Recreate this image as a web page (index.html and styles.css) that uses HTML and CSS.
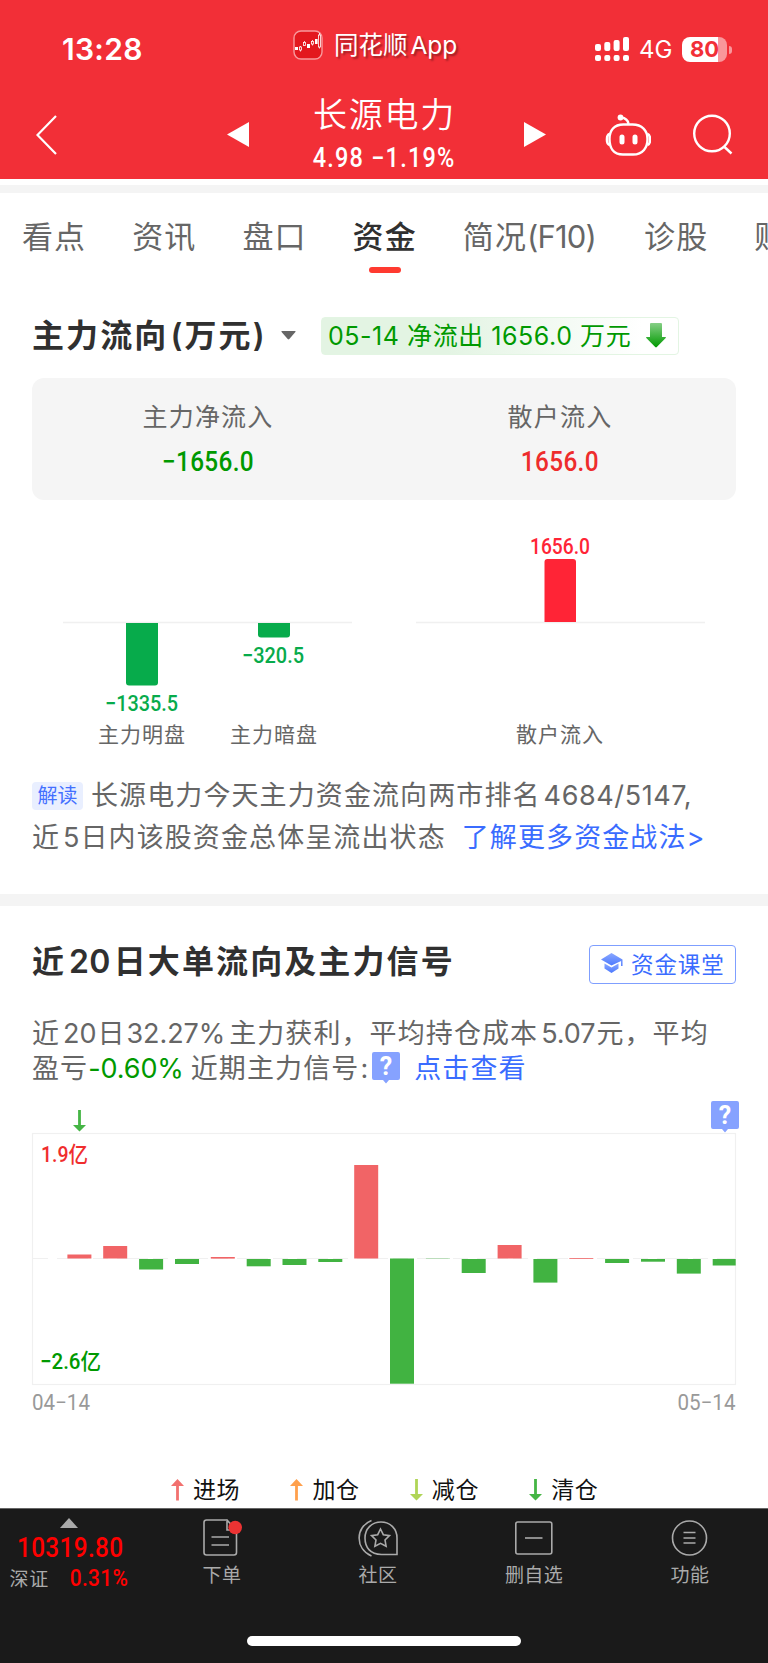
FILE: index.html
```html
<!DOCTYPE html>
<html lang="zh-CN">
<head>
  <meta charset="UTF-8" />
  <meta name="viewport" content="width=device-width, initial-scale=1.0"/>
  <title>长源电力 - 资金</title>
  <link rel="stylesheet" href="styles.css">
</head>
<body>
  <header class="header">
    <div class="status-bar">
      <span class="time">13:28</span>
      <div class="app-name">
        <svg width="30" height="30" viewBox="0 0 30 30">
          <rect x="1" y="1" width="28" height="28" rx="7" fill="#e3181e" stroke="#f8999c" stroke-width="1.4"/>
          <g fill="#fff">
            <rect x="2" y="17" width="3" height="3"/>
            <rect x="14" y="14" width="3" height="4"/>
            <rect x="22" y="9" width="2.6" height="5"/>
          </g>
          <g fill="none" stroke="#fff" stroke-width=".8">
            <path d="M7.500 16v1M7.500 20v1.500M11.500 11v1M19.500 10v1M19.500 14v1.500M26.500 3v2M26.500 17v1.500"/>
            <rect x="6.500" y="17" width="2" height="3"/>
            <rect x="10.500" y="12.500" width="2" height="3"/>
            <rect x="18.500" y="11.500" width="2" height="2.500"/>
            <rect x="25.500" y="5" width="2" height="12"/>
          </g>
        </svg>
        <span>同花顺 App</span>
      </div>
      <div class="signals">
        <svg width="34" height="25" viewBox="0 0 34 25" fill="#fff">
          <rect x="0" y="7" width="6" height="7" rx="2"/>
          <rect x="9.300" y="5" width="6" height="9" rx="2"/>
          <rect x="18.600" y="3" width="6" height="11" rx="2"/>
          <rect x="28" y="0" width="6" height="14" rx="2"/>
          <rect x="0" y="18" width="6" height="6" rx="2"/>
          <rect x="9.300" y="18" width="6" height="6" rx="2"/>
          <rect x="18.600" y="18" width="6" height="6" rx="2"/>
          <rect x="28" y="18" width="6" height="6" rx="2"/>
        </svg>
        <span class="network">4G</span>
        <span class="battery">80</span>
      </div>
    </div>

    <div class="title-bar">
      <svg class="back" width="21" height="40" viewBox="0 0 21 40" fill="none" stroke="#fff" stroke-width="2.200">
        <path d="M20 1L1.500 20L20 39"/>
      </svg>
      <svg class="prev" width="22" height="25" viewBox="0 0 22 25" fill="#fff"><path d="M0 12.500L22 0v25z"/></svg>
      <div class="stock">
        <h1>长源电力</h1>
        <p><span class="num">4.98 −1.19%</span></p>
      </div>
      <svg width="22" height="25" viewBox="0 0 22 25" fill="#fff"><path d="M22 12.500L0 0v25z"/></svg>
      <svg class="robot" width="46" height="42" viewBox="0 0 46 42" fill="none" stroke="#fff" stroke-width="2.400">
        <circle cx="15.500" cy="3.500" r="2.900" fill="#fff" stroke="none"/>
        <path d="M16 3.500C20 4 23 5.500 23.500 10"/>
        <path d="M18.500 10.500h9C37 10.500 42.500 16.500 42.500 25S38 40.500 28 40.500H18C8 40.500 4.500 33.500 4.500 25S9 10.500 18.500 10.500z"/>
        <path d="M4.500 20C1 21 1 30 4.500 31M42.500 20c3.500 1 3.500 10 0 11"/>
        <path d="M17 23v5M30 23v5" stroke-width="5" stroke-linecap="round"/>
      </svg>
      <svg class="search" width="40" height="41" viewBox="0 0 40 41" fill="none" stroke="#fff" stroke-width="2.400">
        <circle cx="19" cy="19.500" r="17.800"/>
        <path d="M31.500 33L38.500 39.500"/>
      </svg>
    </div>
  </header>

  <nav class="tabs">
    <a>看点</a>
    <a>资讯</a>
    <a>盘口</a>
    <a class="active">资金</a>
    <a class="brief"><span>简况<i>(F10)</i></span></a>
    <a>诊股</a>
    <a>财</a>
  </nav>

  <section class="flow">
    <div class="flow-head">
      <h2>主力流向<span class="unit">(万元)</span></h2>
      <svg class="caret" width="15" height="9" viewBox="0 0 15 9" fill="#666"><path d="M1 0h13q1 0 .4 1L8.300 8q-.8.800-1.600 0L.6 1Q0 0 1 0z"/></svg>
      <div class="flow-tag">
        <span>05-14 净流出 1656.0 万元</span>
        <svg width="20" height="25" viewBox="0 0 20 25">
          <defs>
            <linearGradient id="arrow" x1="0" y1="0" x2="0" y2="1">
              <stop offset="0" stop-color="#86cf86"/>
              <stop offset="1" stop-color="#009a00"/>
            </linearGradient>
          </defs>
          <path d="M5 0h10q1 0 1 1v13h3.500q.7.300.2 1L10.800 24q-.8.800-1.600 0L.3 15q-.5-.7.200-1H4V1q0-1 1-1z" fill="url(#arrow)"/>
        </svg>
      </div>
    </div>

    <div class="summary">
      <div>
        <p>主力净流入</p>
        <strong class="num green">−1656.0</strong>
      </div>
      <div>
        <p>散户流入</p>
        <strong class="num red">1656.0</strong>
      </div>
    </div>

    <svg class="flow-chart" width="704" height="225" viewBox="32 530 704 225">
      <path d="M63 622.500H352M416 622.500H705" stroke="#f0f0f0" stroke-width="1.500"/>
      <path d="M126 623h32v59.500q0 3-3 3h-26q-3 0-3-3z" fill="#07ab4b"/>
      <path d="M258 623h32v11.500q0 3-3 3h-26q-3 0-3-3z" fill="#07ab4b"/>
      <path d="M544.500 622v-60q0-3 3-3h25.500q3 0 3 3v60z" fill="#ff2436"/>
      <g class="chart-num" fill="#07ab4b">
        <text x="105" y="711" textLength="73" lengthAdjust="spacingAndGlyphs">−1335.5</text>
        <text x="242" y="663" textLength="62" lengthAdjust="spacingAndGlyphs">−320.5</text>
        <text x="530" y="553.500" textLength="60" lengthAdjust="spacingAndGlyphs" fill="#ff2436">1656.0</text>
      </g>
      <g class="chart-label">
        <text x="142" y="742">主力明盘</text>
        <text x="274" y="742">主力暗盘</text>
        <text x="560" y="742">散户流入</text>
      </g>
    </svg>

    <p class="reading"><span class="reading-tag">解读</span>长源电力今天主力资金流向两市排名<span class="digits rank">4684/5147,</span><br>近<span class="digits">5</span>日内该股资金总体呈流出状态<a>了解更多资金战法&gt;</a></p>
  </section>

  <section class="signal">
    <div class="signal-head">
      <h2>近<span class="digits">20</span>日大单流向及主力信号</h2>
      <a class="course">
        <svg width="22" height="20" viewBox="0 0 22 20">
          <defs>
            <linearGradient id="cap" x1="0" y1="0" x2="0" y2="1">
              <stop offset="0" stop-color="#8ba8ff"/>
              <stop offset="1" stop-color="#4a78ff"/>
            </linearGradient>
          </defs>
          <g fill="url(#cap)">
            <path d="M10.500 0L21.500 6.500V13h-1.400V8L10.500 12.500L0 6.500z"/>
            <path d="M3.500 10.500L10.500 14.500L17.500 10.500V15.500L10.500 20L3.500 15.500z"/>
          </g>
        </svg>
        资金课堂
      </a>
    </div>

    <p class="intro">近<span class="digits">20</span>日<span class="digits profit">32.27%</span>主力获利，平均持仓成本<span class="digits">5.07</span>元，平均<br>盈亏<span class="loss">-0.60%</span>近期主力信号<span class="colon">:</span><svg class="help" width="28" height="32" viewBox="0 0 28 32"><path d="M2 0h24q2 0 2 2v24q0 2-2 2h-9l-3 3.500L11 28H2q-2 0-2-2V2Q0 0 2 0z" fill="#86a2ff"/><text x="14" y="23">?</text></svg><a>点击查看</a></p>

    <div class="markers">
      <svg class="clear-mark" width="13" height="22" viewBox="0 0 13 22" fill="#45b545"><path d="M5.100 0h2.800v15H13L6.500 21.500L0 15h5.100z"/></svg>
      <svg class="help" width="28" height="32" viewBox="0 0 28 32"><path d="M2 0h24q2 0 2 2v24q0 2-2 2h-9l-3 3.500L11 28H2q-2 0-2-2V2Q0 0 2 0z" fill="#86a2ff"/><text x="14" y="23">?</text></svg>
    </div>

    <svg class="signal-chart" width="706" height="286" viewBox="31 1132 706 286">
      <rect x="32.500" y="1133.500" width="703" height="251" fill="none" stroke="#f0f0f0" stroke-width="1.200"/>
      <path d="M33 1258.500H736" stroke="#f0f0f0" stroke-dasharray="15 9 31 5"/>
      <g fill="#f16466">
        <rect x="67.400" y="1254.500" width="24" height="4"/>
        <rect x="103.200" y="1246" width="24" height="12.500"/>
        <rect x="210.800" y="1257" width="24" height="1.600"/>
        <rect x="354.200" y="1165" width="24" height="93.500"/>
        <rect x="497.600" y="1245" width="24" height="13.500"/>
        <rect x="569.300" y="1258" width="24" height=".8"/>
      </g>
      <g fill="#41b341">
        <rect x="139.100" y="1259" width="24" height="10.500"/>
        <rect x="175" y="1259" width="24" height="5"/>
        <rect x="246.700" y="1259" width="24" height="7.300"/>
        <rect x="282.500" y="1259" width="24" height="6"/>
        <rect x="318.300" y="1259" width="24" height="3"/>
        <rect x="390" y="1258.500" width="24" height="125.200"/>
        <rect x="425.900" y="1258.500" width="24" height=".3"/>
        <rect x="461.700" y="1259" width="24" height="14"/>
        <rect x="533.400" y="1259" width="24" height="23.600"/>
        <rect x="605.100" y="1259" width="24" height="4"/>
        <rect x="641" y="1259" width="24" height="2.700"/>
        <rect x="676.800" y="1259" width="24" height="14.600"/>
        <rect x="712.700" y="1259" width="23" height="6.500"/>
      </g>
      <g class="chart-num">
        <text x="41" y="1162" textLength="47" lengthAdjust="spacingAndGlyphs" fill="#f02d2d">1.9亿</text>
        <text x="40" y="1368.500" textLength="61" lengthAdjust="spacingAndGlyphs" fill="#009900">−2.6亿</text>
        <text class="date" x="32" y="1410" textLength="58" lengthAdjust="spacingAndGlyphs">04−14</text>
        <text class="date" x="677.500" y="1410" textLength="58" lengthAdjust="spacingAndGlyphs">05−14</text>
      </g>
    </svg>

    <ul class="legend">
      <li><svg width="13" height="22" viewBox="0 0 13 22" fill="#f2716f"><path d="M5.100 21.500h2.800V7H13L6.500 0L0 7h5.100z"/></svg>进场</li>
      <li><svg width="13" height="22" viewBox="0 0 13 22" fill="#ffa04d"><path d="M5.100 21.500h2.800V7H13L6.500 0L0 7h5.100z"/></svg>加仓</li>
      <li><svg width="13" height="22" viewBox="0 0 13 22" fill="#b0d557"><path d="M5.100 0h2.800v15H13L6.500 21.500L0 15h5.100z"/></svg>减仓</li>
      <li><svg width="13" height="22" viewBox="0 0 13 22" fill="#45b545"><path d="M5.100 0h2.800v15H13L6.500 21.500L0 15h5.100z"/></svg>清仓</li>
    </ul>
  </section>

  <footer class="footer">
    <div class="toolbar">
      <div class="index">
        <svg width="18" height="10" viewBox="0 0 18 10" fill="#aaa"><path d="M9 0L18 10H0z"/></svg>
        <span class="index-value num">10319.80</span>
        <div class="index-row"><span>深证</span><span class="index-rate num">0.31%</span></div>
      </div>
      <a class="tool">
        <svg width="40" height="38" viewBox="0 0 40 38" fill="none" stroke="#aaa" stroke-width="1.600">
          <path d="M24 1H4.500Q2 1 2 3.500V33.500Q2 36 4.500 36H32q2.500 0 2.500-2.500V11H25V1l9 10"/>
          <path d="M9.500 18h17.500M9.500 26h17.500"/>
          <circle cx="33.200" cy="8.500" r="6.800" fill="#eb3333" stroke="none"/>
        </svg>
        下单
      </a>
      <a class="tool">
        <svg width="40" height="38" viewBox="0 0 40 38" fill="none" stroke="#aaa" stroke-width="1.600">
          <path d="M13.500 1.500C-3 8 -3 29.500 13.500 37M39 35.500H23.500C12 35.500 7 28 7 19S13.500 3 23 3S39 10 39 19z"/>
          <path d="M22.500 10l2.800 5.700 6.200.9-4.500 4.400 1.100 6.200-5.600-2.900-5.600 2.900 1.100-6.200-4.500-4.400 6.200-.9z"/>
        </svg>
        社区
      </a>
      <a class="tool">
        <svg width="40" height="38" viewBox="0 0 40 38" fill="none" stroke="#aaa" stroke-width="1.600">
          <rect x="1.800" y="3" width="36" height="32" rx="2"/>
          <path d="M11 19h17.500"/>
        </svg>
        删自选
      </a>
      <a class="tool">
        <svg width="40" height="38" viewBox="0 0 40 38" fill="none" stroke="#aaa" stroke-width="1.600">
          <circle cx="19.500" cy="19" r="17"/>
          <path d="M13.500 13.500h12M13.500 19h12M13.500 24h12"/>
        </svg>
        功能
      </a>
    </div>
    <div class="home-bar"></div>
  </footer>
</body>
</html>
```

FILE: styles.css
```css
* {
  margin: 0;
  padding: 0;
  box-sizing: border-box;
}

body {
  width: 768px;
  height: 1663px;
  display: flex;
  flex-direction: column;
  background: #fff;
  color: #666;
  font-family: Inter, "Noto Sans CJK SC", sans-serif;
  overflow: hidden;
}

svg {
  display: block;
  flex: none;
}

/* narrow figures */
.num {
  display: inline-block;
  font-family: Roboto, "Noto Sans CJK SC", sans-serif;
  font-weight: 500;
  letter-spacing: .4px;
  white-space: pre;
  transform: scaleX(.87);
}

.green {
  color: #009900;
}

.red {
  color: #ee2c2c;
}

/* header */
.header {
  flex: none;
  height: 179px;
  background: #f22f37;
  color: #fff;
}

.status-bar {
  display: flex;
  align-items: center;
  height: 90px;
  padding: 8px 37px 0 62px;
}

.time {
  width: 231px;
  font-size: 30px;
  font-weight: 600;
  letter-spacing: .3px;
}

.app-name {
  display: flex;
  align-items: center;
  gap: 11px;
  width: 302px;
  margin-top: -8px;
  font-size: 24.5px;
  word-spacing: -4px;
  text-shadow: 2px 2px 2px rgba(0, 0, 0, .35);
}

.app-name span {
  padding-bottom: 4px;
}

.signals {
  display: flex;
  align-items: center;
}

.network {
  width: 53px;
  padding-left: 10px;
  font-size: 24px;
  line-height: 25px;
  white-space: nowrap;
}

.battery {
  position: relative;
  flex: none;
  width: 45px;
  height: 25px;
  border-radius: 8px;
  background: linear-gradient(90deg, #fff 36px, #f9979b 36px);
  color: #f22f37;
  font-size: 22px;
  font-weight: 700;
  line-height: 25px;
  text-align: center;
}

.battery::after {
  content: "";
  position: absolute;
  right: -5px;
  top: 9px;
  width: 3px;
  height: 8px;
  border-radius: 0 3px 3px 0;
  background: #f9979b;
}

.title-bar {
  display: flex;
  align-items: center;
  height: 89px;
  padding-left: 36px;
}

.prev {
  margin-left: 170px;
}

.stock {
  width: 275px;
  padding-right: 4px;
  text-align: center;
}

.stock h1 {
  height: 46px;
  font-size: 34px;
  font-weight: 350;
  line-height: 42px;
  letter-spacing: 1.8px;
}

.stock p {
  height: 36px;
  font-size: 27px;
  line-height: 35px;
}

.stock .num {
  letter-spacing: 1.4px;
}

.robot {
  margin-left: 59px;
}

.search {
  margin-left: 42px;
}

/* tabs */
.tabs {
  flex: none;
  display: flex;
  gap: 46px;
  height: 94px;
  margin-top: 6px;
  padding: 27px 0 0 22px;
  border-top: 8px solid #f4f4f4;
  font-size: 31px;
  line-height: 34px;
  letter-spacing: 1.1px;
  white-space: nowrap;
  overflow: hidden;
}

.tabs a {
  display: flex;
  flex: none;
  flex-direction: column;
  align-items: center;
}

.tabs .brief {
  margin-right: 2px;
}

.brief i {
  font-style: normal;
  letter-spacing: -.8px;
}

.tabs .active {
  color: #303030;
  font-weight: 500;
}

.tabs .active::after {
  content: "";
  width: 32px;
  height: 6px;
  margin-top: 13px;
  border-radius: 3px;
  background: #ff3a30;
}

h2 {
  color: #303030;
  font-size: 32px;
  font-weight: 600;
  line-height: 40px;
  letter-spacing: 2.1px;
  white-space: nowrap;
}

/* main force flow */
.flow {
  flex: none;
  height: 615px;
  padding: 38px 32px 0;
}

.flow-head {
  display: flex;
  align-items: center;
  height: 37px;
}

.unit {
  margin-left: 2px;
}

.flow-head h2 {
  width: 249px;
}

.flow-tag {
  display: flex;
  align-items: center;
  justify-content: space-between;
  width: 358px;
  height: 38px;
  margin-left: 25px;
  padding: 0 12px 0 6px;
  border: 1px solid #e3f5e3;
  border-radius: 4px;
  background: linear-gradient(90deg, #e3f4e3 35%, #fff 90%);
  color: #009900;
  font-size: 25px;
  letter-spacing: .55px;
  white-space: nowrap;
}

.flow-tag span {
  padding-bottom: 4px;
}

.summary {
  display: grid;
  grid-template-columns: 1fr 1fr;
  height: 122px;
  margin-top: 24px;
  padding-top: 20px;
  border-radius: 12px;
  background: #f5f5f5;
  text-align: center;
}

.summary p {
  font-size: 25px;
  line-height: 38px;
  letter-spacing: 1.2px;
}

.summary strong {
  margin-top: 8px;
  font-size: 28px;
  line-height: 36px;
}

.flow-chart {
  margin-top: 30px;
}

.chart-num {
  font-family: Roboto, "Noto Sans CJK SC", sans-serif;
  font-size: 22px;
  font-weight: 500;
}

.chart-num .date {
  fill: #999;
  font-weight: 400;
}

.chart-label {
  fill: #666;
  font-size: 21px;
  letter-spacing: 1px;
  text-anchor: middle;
}

.reading,
.intro {
  font-size: 27px;
  letter-spacing: 1.1px;
  white-space: nowrap;
}

.reading {
  margin-top: 20px;
  line-height: 42px;
}

.reading-tag {
  display: inline-block;
  width: 51px;
  height: 28px;
  margin-right: 8px;
  border-radius: 4px;
  background: #e9efff;
  color: #4370ff;
  font-size: 20px;
  letter-spacing: 0;
  line-height: 28px;
  text-align: center;
  vertical-align: 2px;
}

.digits {
  margin: 0 1px 0 3px;
  letter-spacing: -.1px;
}

.rank {
  letter-spacing: .6px;
}

.profit {
  margin: 0 4px 0 1px;
}

h2 .digits {
  margin-right: 3px;
  letter-spacing: .3px;
}

.reading a,
.intro a {
  color: #3a6cff;
}

.reading a {
  margin-left: 16px;
}

/* 20 day signals */
.signal {
  flex: none;
  height: 614px;
  padding: 35px 32px 0;
  border-top: 12px solid #f4f4f4;
}

.signal-head {
  display: flex;
  align-items: center;
  justify-content: space-between;
  height: 42px;
}

.course {
  display: flex;
  align-items: center;
  gap: 8px;
  width: 147px;
  height: 39px;
  margin-top: 4px;
  padding: 0 0 2px 11px;
  border: 1.500px solid #7f9fff;
  border-radius: 4px;
  color: #3a6cff;
  font-size: 22.5px;
  letter-spacing: .9px;
  white-space: nowrap;
}

.intro {
  height: 70px;
  margin-top: 33px;
  line-height: 35px;
}

.loss {
  margin: 0 7px 0 0;
  color: #009900;
  letter-spacing: -.1px;
}

.colon {
  margin: 0 2px 0 1px;
}

.intro .help {
  display: inline-block;
  margin: -4px 14px 0 1px;
  vertical-align: -6px;
}

.help text {
  fill: #fff;
  font-family: Roboto, sans-serif;
  font-size: 25px;
  font-weight: 700;
  letter-spacing: 0;
  text-anchor: middle;
}

.markers {
  display: flex;
  align-items: center;
  justify-content: space-between;
  height: 32px;
  margin: 15px -2.5px 0 41px;
}

.clear-mark {
  margin-top: 7px;
}

.signal-chart {
  margin: -1px 0 0 -1px;
}

.legend {
  display: grid;
  grid-template-columns: repeat(4, 119.4px);
  margin: 55px 0 0 139px;
  color: #111;
  font-size: 23px;
  line-height: 34px;
  letter-spacing: .6px;
  list-style: none;
}

.legend li {
  display: flex;
  align-items: center;
  gap: 9px;
}

/* bottom bar */
.footer {
  flex: none;
  height: 155px;
  border-top: 1px solid #666;
  background: #1a1a1a;
  color: #aaa;
  font-size: 19px;
}

.toolbar {
  display: flex;
  height: 127px;
}

.index {
  display: flex;
  flex-direction: column;
  align-items: center;
  width: 144px;
  padding: 9px 6px 0 0;
}

.index-value {
  margin: 5px 0 0 3px;
  color: #f00;
  font-size: 28px;
  line-height: 30px;
}

.index-row {
  display: flex;
  justify-content: space-between;
  width: 119px;
  margin-top: 5px;
  line-height: 24px;
  letter-spacing: .8px;
}

.index-rate {
  color: #f00;
  font-size: 24px;
  line-height: 21px;
  transform-origin: right;
}

.tool {
  display: flex;
  flex: 1;
  flex-direction: column;
  align-items: center;
  gap: 5px;
  padding-top: 10px;
  line-height: 28px;
  letter-spacing: .4px;
}

.home-bar {
  width: 274px;
  height: 10px;
  margin: 0 auto;
  border-radius: 5px;
  background: #fff;
}
```
